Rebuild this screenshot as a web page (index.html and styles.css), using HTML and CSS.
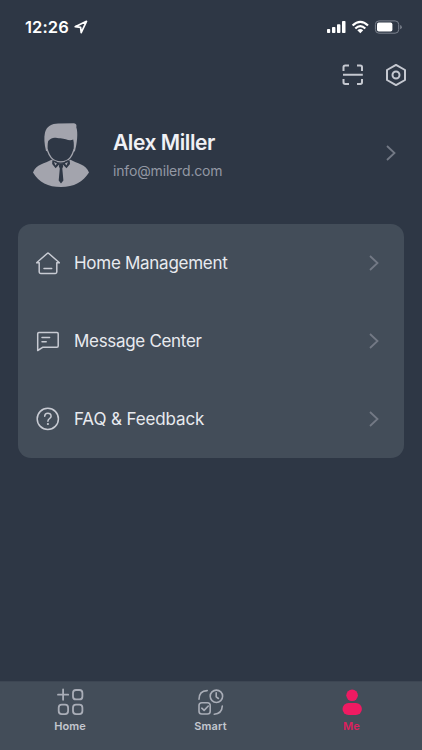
FILE: index.html
```html
<!DOCTYPE html>
<html lang="en">
<head>
<meta charset="utf-8">
<meta name="viewport" content="width=device-width, initial-scale=1">
<title>Me</title>
<link rel="stylesheet" href="styles.css">
</head>
<body>
<div class="screen">
  <header class="status">
    <span class="time">12:26</span>
    <svg class="locate" width="14" height="14" viewBox="0 0 14 14"><path d="M1.2 6.7 12.5 1.3 7.2 12.6 6.6 7.3Z"/></svg>
    <svg class="signals" width="78" height="16" viewBox="326 19 78 16">
      <g fill="#fff">
        <rect x="327" y="29" width="3.200" height="4" rx=".8"/><rect x="332" y="27" width="3.400" height="6" rx=".8"/><rect x="337" y="24.200" width="3.400" height="8.800" rx=".8"/><rect x="342" y="21" width="3.500" height="12" rx=".8"/>
        <path d="M360.300 33.200 357.300 30.300Q360.300 27.900 363.200 30.300Z"/>
        <rect x="377" y="22.600" width="15.400" height="8.900" rx="1.800"/>
      </g>
      <g fill="none" stroke="#fff" stroke-width="2.200"><path d="M352.600 25.500Q360.300 18.100 368 25.500M355.300 28.500Q360.300 23.600 365.300 28.500"/></g>
      <rect x="375.400" y="20.900" width="23.300" height="12.300" rx="3.600" fill="none" stroke="#7c828e"/>
      <path d="M400.200 25v4.300q1.600-.6 1.600-2.150T400.200 25Z" fill="#7c828e"/>
    </svg>
  </header>

  <nav class="tools">
    <svg class="line bold" width="22" height="22" viewBox="0 0 22 22"><path d="M1.500 7V3.200Q1.500 1.500 3.200 1.500H7M15 1.500h3.300Q20 1.500 20 3.200V7M20 15v3.300Q20 20 18.300 20H15M7 20H3.200Q1.500 20 1.500 18.300V15M1 10.800h19.800"/></svg>
    <svg class="line bold" width="22" height="24" viewBox="0 0 22 24"><path d="M11 1.900 20 7v10l-9 5.100L2 17V7Z"/><circle cx="11" cy="12" r="3.500"/></svg>
  </nav>

  <section class="profile">
    <svg class="avatar" width="58" height="66" viewBox="32 122 58 66">
      <path fill="#a3a4ad" d="M46 151C44.300 144 43.800 137.500 45 132.500C46.500 126.500 52 123.400 58.500 123.500L74 123.300Q77.200 124 76.300 127.300C78.300 133 77 143.500 75 151L73.600 152C73.800 147 74.200 143 73.200 139.600C69 141.800 66 138.600 60.500 138.300C55.500 138 52.500 136 48.200 141C47.400 144 47.700 147 47.600 151.300Z"/>
      <path fill="none" stroke="#a3a4ad" stroke-width="1.300" d="M46.900 149C49 155 51.500 161.500 60.800 161.900C70 161.500 72.300 155 74.300 149"/>
      <path fill="#a3a4ad" d="M51.500 159.800C45 163.800 36 164 33 172.500C39 182.500 48 187 61 187S83 182 89 172.500C86 164 77 163.800 70.500 159.800L61 164Z"/>
      <path fill="#2e3745" d="M52.300 160.500 55 160.800 60.900 164 67 160.600 69.700 160.500 70 164 66.500 168.200 62.800 164.400 63.200 166.500 62.300 168.500 63.400 180.500 61 183.500 58.700 180.500 59.800 168.500 58.900 166.500 59.200 164.400 55.600 168.200 52.200 164Z"/>
      <path fill="#a3a4ad" d="m54 162 3 1.600-1.600 1.800ZM67.900 162l-3 1.600 1.600 1.800Z"/>
    </svg>
    <div class="identity">
      <h1 class="name">Alex Miller</h1>
      <p class="email">info@milerd.com</p>
    </div>
    <svg class="chevron" width="12" height="16" viewBox="0 0 12 16"><path d="m2 1 7.500 7L2 15"/></svg>
  </section>

  <main class="card">
    <a class="row">
      <svg class="line" width="24" height="24" viewBox="36 251 24 24"><path d="M36.600 262.700 47.200 253.500Q48 252.800 48.800 253.500L59.400 262.700H56.800V272q0 1.400-1.400 1.400H40.600q-1.400 0-1.400-1.400V262.700H36.600M44 268.600h7.700"/></svg>
      <span class="label home">Home Management</span>
      <svg class="chevron" width="12" height="16" viewBox="0 0 12 16"><path d="m2 1 7.500 7L2 15"/></svg>
    </a>
    <a class="row">
      <svg class="line" width="24" height="24" viewBox="36 329 24 24"><path d="M37.700 350.500V333.800q0-1.200 1.200-1.200H57q1.200 0 1.200 1.200V346q0 1.200-1.200 1.200H43ZM42 337.600h7.600M42 341.700h4.200"/></svg>
      <span class="label message">Message Center</span>
      <svg class="chevron" width="12" height="16" viewBox="0 0 12 16"><path d="m2 1 7.500 7L2 15"/></svg>
    </a>
    <a class="row">
      <svg class="line" width="24" height="24" viewBox="0 0 24 24"><circle cx="11.800" cy="11.900" r="10.600"/><path d="M8.700 9.300C8.700 5.100 15.100 5.100 15.100 9.200C15.100 11.600 11.900 11.400 11.900 14.200"/><circle class="dot" cx="11.900" cy="17" r="1.100"/></svg>
      <span class="label faq">FAQ &amp; Feedback</span>
      <svg class="chevron" width="12" height="16" viewBox="0 0 12 16"><path d="m2 1 7.500 7L2 15"/></svg>
    </a>
  </main>

  <footer class="tabs">
    <a class="tab">
      <svg class="tab-icon" width="28" height="28" viewBox="56 688 28 28"><g stroke-width="1.800"><path d="M58 694.700h10.200M63.100 689.500v10.300"/><rect x="73" y="690" width="9.400" height="9.400" rx="3"/><rect x="58.700" y="704.700" width="9.400" height="9.400" rx="3"/><rect x="73" y="704.700" width="9.400" height="9.400" rx="3"/></g></svg>
      <span class="caption">Home</span>
    </a>
    <a class="tab">
      <svg class="tab-icon" width="28" height="28" viewBox="197 688 28 28"><g stroke-width="1.600"><circle cx="216.400" cy="696.300" r="6.200"/><path d="M216.200 692.800v4l2.200 1.700M199 699.300C199 694 202 690.800 207.200 690.600M222.300 706C222 711.500 219 714 214.200 714.200M201.800 708.200l2.300 2.200 4.200-4.400"/><rect x="199" y="702.800" width="11.200" height="11.200" rx="2.800"/></g></svg>
      <span class="caption">Smart</span>
    </a>
    <a class="tab active">
      <svg class="tab-icon" width="28" height="28" viewBox="337 688 28 28"><circle cx="351.100" cy="695.300" r="5.800"/><rect x="341.500" y="703" width="19.400" height="12" rx="6"/></svg>
      <span class="caption">Me</span>
    </a>
  </footer>
</div>
</body>
</html>
```
FILE: styles.css
```css
* { box-sizing: border-box; }
body { margin: 0; background: #2e3745; font-family: Inter, "Liberation Sans", sans-serif; }
svg { display: block; flex: none; }
h1, p { margin: 0; }
.screen { width: 422px; height: 750px; display: flex; flex-direction: column; color: #e8eaef; }

.status { height: 54px; display: flex; align-items: center; padding: 0 18px 0 25px; color: #fff; }
.time { font-size: 16.5px; font-weight: 600; letter-spacing: .1px; }
.locate { margin-left: 5px; fill: none; stroke: #fff; stroke-width: 1.7; stroke-linejoin: round; }
.signals { margin-left: auto; }

.tools { height: 42px; display: flex; align-items: center; justify-content: flex-end; gap: 21px; padding-right: 15px; }
.line { fill: none; stroke: #c8cbd3; stroke-width: 1.5; stroke-linejoin: round; stroke-linecap: round; }
.bold { stroke-width: 2; stroke: #c5c8d0; stroke-linecap: butt; }
.dot { fill: #c8cbd3; stroke: none; }

.profile { height: 128px; display: flex; align-items: center; padding: 0 25px 14px 32px; }
.avatar { margin-top: 4px; }
.identity { flex: 1; margin: 3px 0 0 23px; }
.name { font-size: 21px; line-height: 28px; font-weight: 600; letter-spacing: -.43px; color: #f0f1f5; }
.email { font-size: 14px; line-height: 20px; margin-top: 4px; letter-spacing: -.16px; color: #9398a4; }
.chevron { fill: none; stroke: #737985; stroke-width: 1.8; }

.card { margin: 0 18px; height: 234px; border-radius: 13px; background: #434d59; display: grid; grid-template-rows: repeat(3, 78px); }
.row { display: flex; align-items: center; padding: 0 24px 0 18px; }
.label { flex: 1; margin-left: 14px; font-size: 17px; line-height: 24px; white-space: nowrap; }
.home { letter-spacing: -.28px; }
.message { letter-spacing: -.31px; }
.faq { letter-spacing: -.12px; }

.tabs { margin-top: auto; height: 69px; background: #434d59; border-top: 1px solid #3d4653; display: grid; grid-template-columns: 140px 141px 141px; }
.tab { display: flex; flex-direction: column; align-items: center; padding-top: 6px; color: #c3c7cf; }
.tab-icon { fill: none; stroke: #a9adb7; stroke-linecap: round; stroke-linejoin: round; }
.caption { font-size: 11px; line-height: 14px; margin-top: 3px; font-weight: 600; letter-spacing: .1px; }
.active { color: #df205f; }
.active .tab-icon { fill: #ef1a62; stroke: none; }
```
